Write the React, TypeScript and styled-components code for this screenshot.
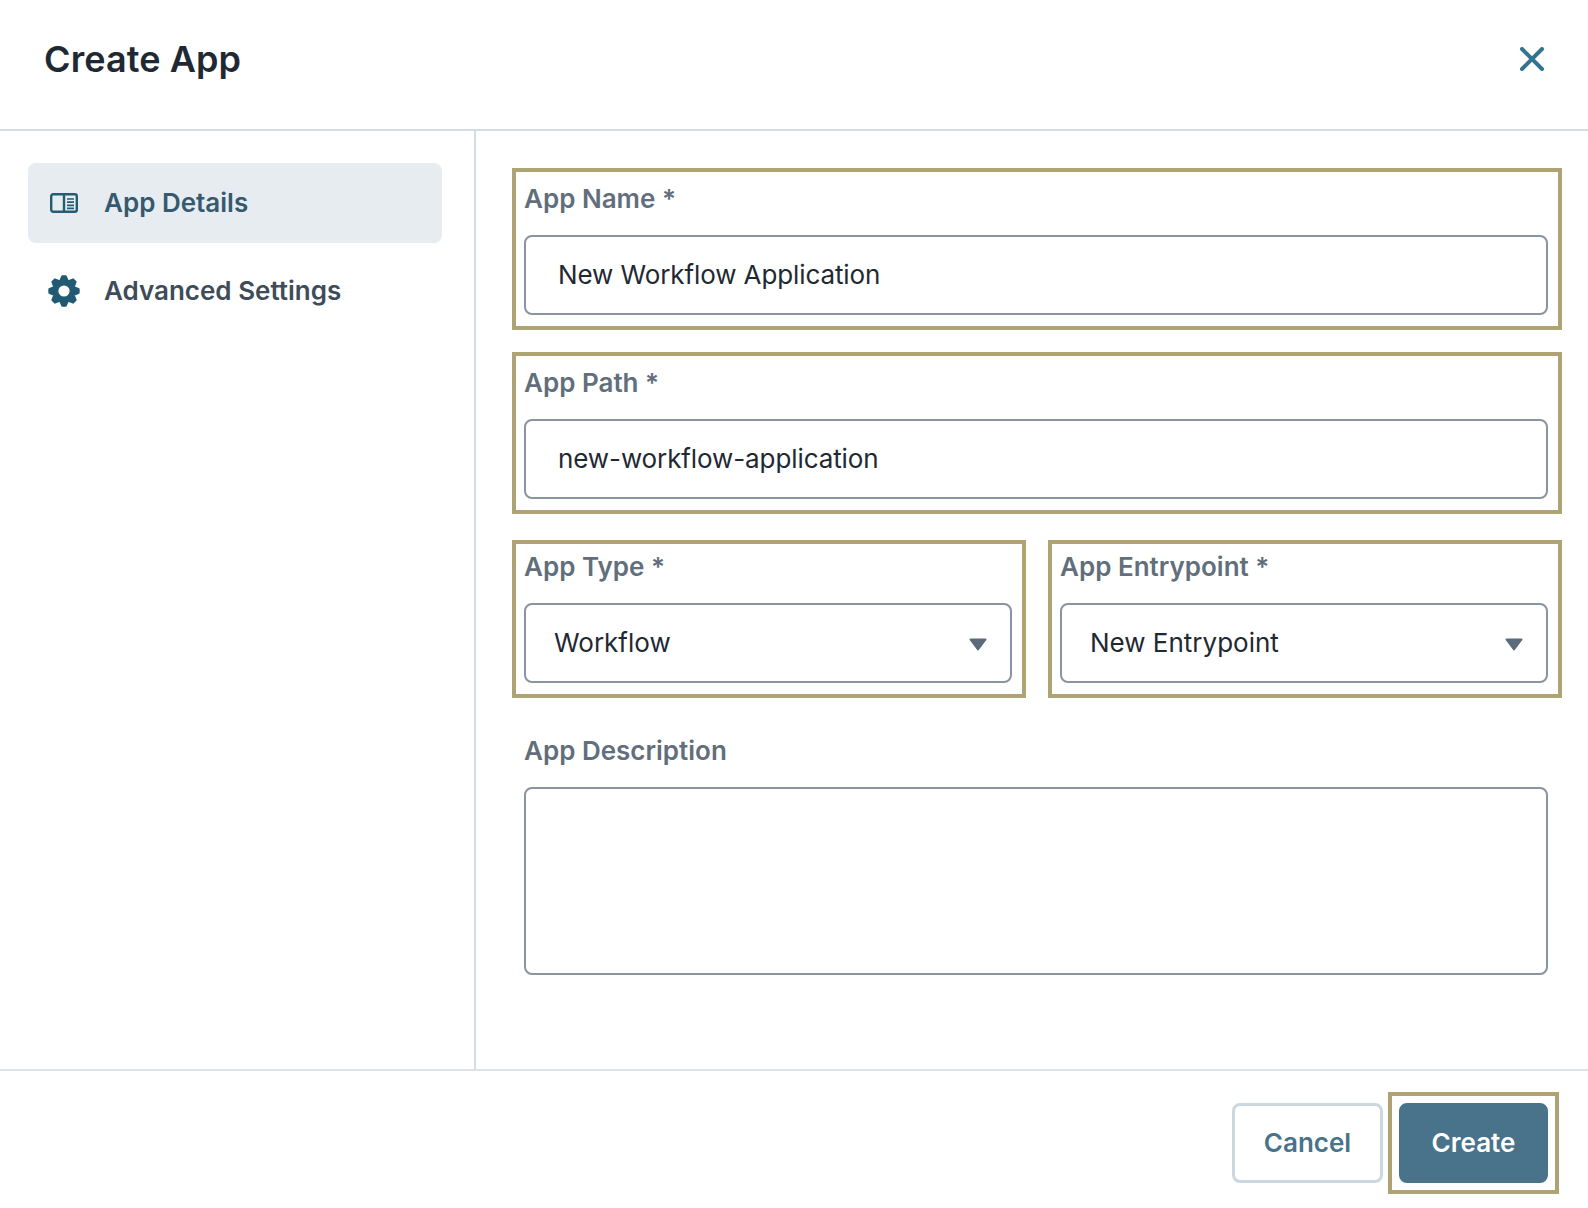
import React from 'react';
import styled, { createGlobalStyle } from 'styled-components';

const GlobalStyle = createGlobalStyle`
  html, body {
    margin: 0;
    padding: 0;
    background: #fff;
    font-family: Inter, "Liberation Sans", sans-serif;
  }
  * {
    box-sizing: border-box;
  }
`;

const GOLD = '#afa374';

const Modal = styled.div`
  width: 1588px;
  height: 1208px;
  display: flex;
  flex-direction: column;
  background: #fff;
`;

const Header = styled.header`
  height: 131px;
  padding: 0 40px 12px 44px;
  display: flex;
  align-items: center;
  justify-content: space-between;
  border-bottom: 2px solid #d3dce2;
`;

const Title = styled.h1`
  margin: 0;
  font-size: 36px;
  font-weight: 600;
  line-height: 42px;
  letter-spacing: 0.1px;
  color: #1f2933;
`;

const CloseButton = styled.button`
  width: 32px;
  height: 32px;
  padding: 0;
  border: 0;
  background: none;
  display: flex;
  align-items: center;
  justify-content: center;
`;

const Body = styled.div`
  height: 938px;
  display: flex;
`;

const Sidebar = styled.nav`
  width: 476px;
  padding: 32px 32px 0 28px;
  display: flex;
  flex-direction: column;
  gap: 8px;
  border-right: 2px solid #d3dce2;
`;

const NavItem = styled.div<{ $active?: boolean }>`
  height: 80px;
  padding: 0 0 2px 20px;
  display: flex;
  align-items: center;
  gap: 24px;
  border-radius: 8px;
  font-size: 26px;
  font-weight: 600;
  color: ${(p) => (p.$active ? '#35596e' : '#3e4c59')};
  background: ${(p) => (p.$active ? '#e7ecf0' : 'transparent')};
`;

const IconSlot = styled.span`
  width: 32px;
  height: 32px;
  margin-top: 2px;
  display: flex;
  align-items: center;
  justify-content: center;
  flex: none;
`;

const Form = styled.main`
  flex: 1;
  padding: 37px 26px 0 36px;
  display: flex;
  flex-direction: column;
`;

const Field = styled.div<{ $outlined?: boolean; $gap?: number; $tight?: boolean }>`
  margin-top: ${(p) => p.$gap ?? 0}px;
  padding: ${(p) => (p.$tight ? 4 : 8)}px 10px 11px 8px;
  border: 4px solid ${(p) => (p.$outlined ? GOLD : 'transparent')};
`;

const Row = styled.div`
  margin-top: 26px;
  display: grid;
  grid-template-columns: 1fr 1fr;
  gap: 22px;
`;

const Label = styled.label`
  display: block;
  height: 41px;
  margin-bottom: 14px;
  font-size: 26px;
  font-weight: 600;
  line-height: 38px;
  color: #616e7c;
`;

const Input = styled.div`
  height: 80px;
  padding: 0 32px 1px;
  display: flex;
  align-items: center;
  border: 2px solid #8a949f;
  border-radius: 8px;
  font-size: 26px;
  letter-spacing: -0.1px;
  color: #1f2933;
`;

const Select = styled(Input)`
  padding: 0 23px 2px 28px;
  justify-content: space-between;
  letter-spacing: 0;
`;

const Caret = styled.svg`
  width: 18px;
  height: 13px;
  margin-top: 5px;
  flex: none;
`;

const TextArea = styled.div`
  height: 188px;
  border: 2px solid #8a949f;
  border-radius: 8px;
`;

const Footer = styled.footer`
  flex: 1;
  padding: 21px 29px 0 0;
  display: flex;
  align-items: flex-start;
  justify-content: flex-end;
  gap: 5px;
  border-top: 2px solid #dde2e6;
`;

const ButtonFrame = styled.div`
  padding: 7px;
  border: 4px solid ${GOLD};
`;

const Button = styled.button<{ $primary?: boolean }>`
  width: ${(p) => (p.$primary ? 149 : 151)}px;
  height: 80px;
  margin-top: ${(p) => (p.$primary ? 0 : 11)}px;
  padding: 0 0 2px;
  border-radius: 8px;
  border: 3px solid ${(p) => (p.$primary ? '#48738a' : '#ccd8df')};
  background: ${(p) => (p.$primary ? '#48738a' : '#fff')};
  color: ${(p) => (p.$primary ? '#fff' : '#48738a')};
  font-family: inherit;
  font-size: 26px;
  font-weight: 600;
`;

const CloseIcon = () => (
  <svg width="24" height="24" viewBox="0 0 24 24" fill="none">
    <path d="M2 2L22 22M22 2L2 22" stroke="#33758f" strokeWidth="4" strokeLinecap="round" />
  </svg>
);

const DetailsIcon = () => (
  <svg width="28" height="20" viewBox="0 0 28 20" fill="none" stroke="#265c73">
    <rect x="1.2" y="1.2" width="25.6" height="17.6" rx="2" strokeWidth="2.4" />
    <path d="M14 1V19" strokeWidth="2.4" />
    <path d="M17 6H24M17 9.2H24M17 12.4H24M17 15.4H24" strokeWidth="1.7" />
  </svg>
);

// eight rounded teeth round a centre hole
const gearPath = () => {
  const pt = (deg: number, r: number) => {
    const a = ((deg - 90) * Math.PI) / 180;
    return `${(16 + r * Math.cos(a)).toFixed(2)} ${(16 + r * Math.sin(a)).toFixed(2)}`;
  };
  const pts: string[] = [];
  for (let i = 0; i < 8; i++) {
    const t = i * 45;
    pts.push(pt(t - 7, 14.8), pt(t + 7, 14.8), pt(t + 22.5, 10.4));
  }
  return `M${pts.join('L')}Z`;
};

const GearIcon = () => (
  <svg width="32" height="32" viewBox="0 0 32 32">
    <path d={gearPath()} fill="#215a72" stroke="#215a72" strokeWidth="2" strokeLinejoin="round" />
    <circle cx="16" cy="16" r="5.6" fill="#fff" />
  </svg>
);

const CaretDown = () => (
  <Caret viewBox="0 0 18 13">
    <path d="M1.5 1.5H16.5L9 11.5Z" fill="#5b6b7b" stroke="#5b6b7b" strokeWidth="2" strokeLinejoin="round" />
  </Caret>
);

export default function App() {
  return (
    <Modal>
      <GlobalStyle />
      <Header>
        <Title>Create App</Title>
        <CloseButton>
          <CloseIcon />
        </CloseButton>
      </Header>
      <Body>
        <Sidebar>
          <NavItem $active>
            <IconSlot>
              <DetailsIcon />
            </IconSlot>
            App Details
          </NavItem>
          <NavItem>
            <IconSlot>
              <GearIcon />
            </IconSlot>
            Advanced Settings
          </NavItem>
        </Sidebar>
        <Form>
          <Field $outlined>
            <Label>App Name *</Label>
            <Input>New Workflow Application</Input>
          </Field>
          <Field $outlined $gap={22}>
            <Label>App Path *</Label>
            <Input>new-workflow-application</Input>
          </Field>
          <Row>
            <Field $outlined $tight>
              <Label>App Type *</Label>
              <Select>
                Workflow
                <CaretDown />
              </Select>
            </Field>
            <Field $outlined $tight>
              <Label>App Entrypoint *</Label>
              <Select>
                New Entrypoint
                <CaretDown />
              </Select>
            </Field>
          </Row>
          <Field $gap={22}>
            <Label>App Description</Label>
            <TextArea />
          </Field>
        </Form>
      </Body>
      <Footer>
        <Button>Cancel</Button>
        <ButtonFrame>
          <Button $primary>Create</Button>
        </ButtonFrame>
      </Footer>
    </Modal>
  );
}
